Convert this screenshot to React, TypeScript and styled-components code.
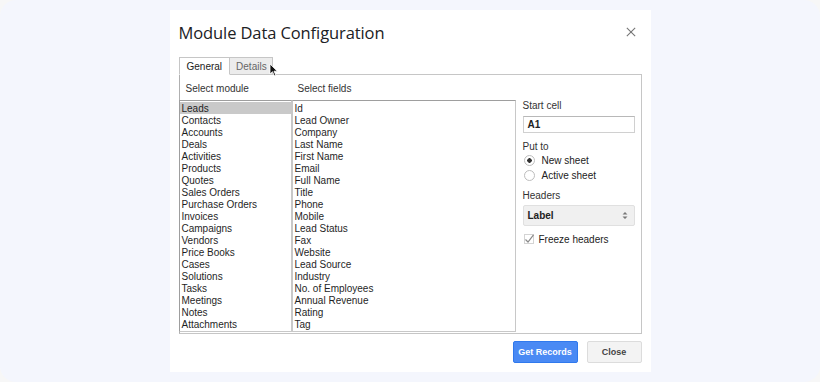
import React from "react";
import styled, { createGlobalStyle } from "styled-components";

const GlobalStyle = createGlobalStyle`
  html, body {
    margin: 0;
    padding: 0;
    background: #f7f7f7;
  }
  body {
    font-family: "Liberation Sans", Arial, sans-serif;
  }
`;

const modules = [
  "Leads", "Contacts", "Accounts", "Deals", "Activities", "Products", "Quotes",
  "Sales Orders", "Purchase Orders", "Invoices", "Campaigns", "Vendors",
  "Price Books", "Cases", "Solutions", "Tasks", "Meetings", "Notes", "Attachments",
];

const fields = [
  "Id", "Lead Owner", "Company", "Last Name", "First Name", "Email", "Full Name",
  "Title", "Phone", "Mobile", "Lead Status", "Fax", "Website", "Lead Source",
  "Industry", "No. of Employees", "Annual Revenue", "Rating", "Tag",
];

export default function App() {
  return (
    <>
      <GlobalStyle />
      <Page>
        <Dialog>
          <Header>
            <Title>Module Data Configuration</Title>
            <CloseIcon viewBox="0 0 12 12">
              <path d="M1 1 L11 11 M11 1 L1 11" stroke="#757575" strokeWidth="1.3" />
            </CloseIcon>
          </Header>

          <Tabs>
            <Tab $active>General</Tab>
            <Tab>Details</Tab>
            <Cursor viewBox="0 0 10 14">
              <path d="M1 1 L1 11 L3.5 8.7 L5.3 12.8 L6.8 12.1 L5 8.2 L8.3 8.2 Z" fill="#111" stroke="#fff" strokeWidth="0.8" />
            </Cursor>
          </Tabs>

          <Panel>
            <ColLabel>Select module</ColLabel>
            <ColLabel>Select fields</ColLabel>
            <Side>
              <FieldLabel $bottom={4}>Start cell</FieldLabel>
              <TextInput>A1</TextInput>

              <FieldLabel $top={8}>Put to</FieldLabel>
              <RadioRow>
                <Radio $checked />
                New sheet
              </RadioRow>
              <RadioRow>
                <Radio />
                Active sheet
              </RadioRow>

              <FieldLabel $top={7} $bottom={3}>Headers</FieldLabel>
              <Select>
                Label
                <svg width="6" height="9" viewBox="0 0 6 9">
                  <path d="M0.5 3.5 L3 1 L5.5 3.5 Z M0.5 5.5 L3 8 L5.5 5.5 Z" fill="#777" />
                </svg>
              </Select>

              <CheckRow>
                <svg width="10" height="10" viewBox="0 0 10 10">
                  <rect x="0.5" y="0.5" width="9" height="9" fill="#fff" stroke="#d4d4d4" />
                  <path d="M1.5 5.5 L4 8 L9.5 0.8" fill="none" stroke="#8a8a8a" strokeWidth="1.2" />
                </svg>
                Freeze headers
              </CheckRow>
            </Side>
            <ListBox>
              {modules.map((m, i) => (
                <ListItem key={m} $selected={i === 0}>{m}</ListItem>
              ))}
            </ListBox>
            <ListBox $wide>
              {fields.map((f) => (
                <ListItem key={f}>{f}</ListItem>
              ))}
            </ListBox>
          </Panel>

          <Footer>
            <PrimaryButton>Get Records</PrimaryButton>
            <Button>Close</Button>
          </Footer>
        </Dialog>
      </Page>
    </>
  );
}

const Page = styled.div`
  width: 820px;
  height: 382px;
  box-sizing: border-box;
  border-radius: 16px;
  background: #f4f6fd;
  display: flex;
  align-items: center;
  justify-content: center;
`;

const Dialog = styled.div`
  width: 481px;
  height: 362px;
  box-sizing: border-box;
  background: #fff;
  padding: 0 9px;
  display: flex;
  flex-direction: column;
`;

const Header = styled.div`
  height: 46px;
  display: flex;
  align-items: center;
  justify-content: space-between;
  padding-right: 6px;
`;

const Title = styled.h1`
  margin: -2px 0 0 0;
  font-family: "Open Sans", Roboto, sans-serif;
  font-weight: 400;
  font-size: 16.5px;
  color: #202124;
  letter-spacing: -0.1px;
`;

const CloseIcon = styled.svg`
  width: 10px;
  height: 10px;
  margin-top: -3px;
`;

const Tabs = styled.div`
  position: relative;
  display: flex;
  margin-top: 1px;
  height: 18px;
  margin-bottom: -1px;
  z-index: 1;
`;

const Tab = styled.div<{ $active?: boolean }>`
  box-sizing: border-box;
  height: 18px;
  padding: 1px 7px 0;
  display: flex;
  align-items: center;
  font-size: 10px;
  border: 1px solid #c6c6c6;
  border-bottom: ${(p) => (p.$active ? "1px solid #fff" : "1px solid #c6c6c6")};
  background: ${(p) => (p.$active ? "#fff" : "#ececec")};
  color: ${(p) => (p.$active ? "#222" : "#666")};
  & + & {
    border-left: none;
    padding: 1px 5px 0 6px;
  }
`;

const Cursor = styled.svg`
  position: absolute;
  left: 90px;
  top: 6px;
  width: 10px;
  height: 14px;
`;

const Panel = styled.div`
  box-sizing: border-box;
  height: 260px;
  border: 1px solid #c6c6c6;
  border-left-color: #b0b0b0;
  display: grid;
  grid-template-columns: 112px 224px 1fr;
  grid-template-rows: 25px 1fr;
  align-content: start;
`;

const ColLabel = styled.div`
  font-size: 10px;
  color: #333;
  padding-left: 6px;
  display: flex;
  align-items: center;
  margin-top: 1px;
`;

const ListBox = styled.div<{ $wide?: boolean }>`
  grid-row: 2;
  box-sizing: border-box;
  height: 232px;
  margin-left: ${(p) => (p.$wide ? "0" : "-1px")};
  border: 1px solid #c8c8c8;
  border-top-color: #9e9e9e;
  border-left-color: ${(p) => (p.$wide ? "#c8c8c8" : "#9e9e9e")};
  padding: 1px 0 0 0;
  overflow: hidden;
`;

const ListItem = styled.div<{ $selected?: boolean }>`
  height: 12px;
  line-height: 13px;
  font-size: 10px;
  color: #1f1f1f;
  padding-left: 2px;
  background: ${(p) => (p.$selected ? "#c9c9c9" : "transparent")};
  white-space: nowrap;
`;

const Side = styled.div`
  grid-column: 3;
  grid-row: 1 / span 2;
  padding: 25px 6px 0 7px;
  display: flex;
  flex-direction: column;
`;

const FieldLabel = styled.div<{ $top?: number; $bottom?: number }>`
  font-size: 10px;
  color: #333;
  line-height: 12px;
  margin-top: ${(p) => p.$top ?? 0}px;
  margin-bottom: ${(p) => p.$bottom ?? 0}px;
`;

const TextInput = styled.div`
  box-sizing: border-box;
  height: 17px;
  border: 1px solid #d0d0d0;
  border-top-color: #b8b8b8;
  font-size: 10px;
  font-weight: 700;
  color: #222;
  padding-left: 4px;
  display: flex;
  align-items: center;
`;

const RadioRow = styled.div`
  display: flex;
  align-items: center;
  height: 15px;
  font-size: 10px;
  color: #222;
  gap: 7px;
  padding-left: 1px;
`;

const Radio = styled.span<{ $checked?: boolean }>`
  box-sizing: border-box;
  width: 11px;
  height: 11px;
  border-radius: 50%;
  border: 1px solid #bdbdbd;
  background: ${(p) =>
    p.$checked ? "radial-gradient(circle, #333 0 2px, #fff 2.5px)" : "#fff"};
`;

const Select = styled.div`
  box-sizing: border-box;
  height: 21px;
  background: #f0f0f0;
  border: 1px solid #e0e0e0;
  border-radius: 2px;
  font-size: 10px;
  font-weight: 700;
  color: #222;
  padding: 0 6px 0 4px;
  display: flex;
  align-items: center;
  justify-content: space-between;
`;

const CheckRow = styled.div`
  display: flex;
  align-items: center;
  gap: 5px;
  margin-top: 7px;
  height: 12px;
  font-size: 10px;
  color: #222;
  padding-left: 1px;
`;

const Footer = styled.div`
  display: flex;
  justify-content: flex-end;
  gap: 9px;
  margin-top: 7px;
`;

const Button = styled.button`
  box-sizing: border-box;
  height: 22px;
  width: 55px;
  padding: 0;
  font-family: "Liberation Sans", Arial, sans-serif;
  font-size: 9px;
  font-weight: 700;
  color: #444;
  background: #f3f3f3;
  border: 1px solid #dcdcdc;
  border-radius: 2px;
`;

const PrimaryButton = styled(Button)`
  width: 65px;
  color: #fff;
  background: #4a8af4;
  border-color: #3079ed;
`;
